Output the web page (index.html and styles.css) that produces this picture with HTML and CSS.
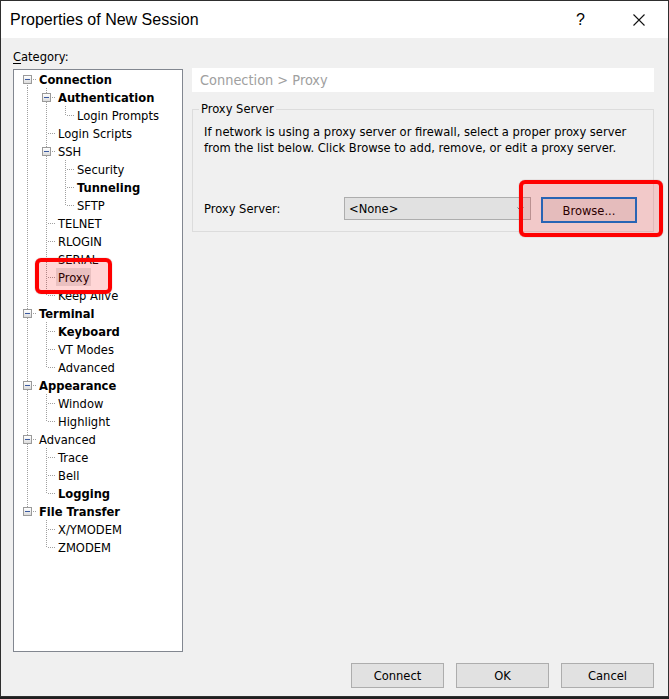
FILE: index.html
```html
<!DOCTYPE html>
<html lang="en">
<head>
<meta charset="utf-8">
<title>Properties of New Session</title>
<link rel="stylesheet" href="styles.css">
</head>
<body>
<div class="window">
  <div class="titlebar">
    <span class="title">Properties of New Session</span>
    <span class="help">?</span>
    <span class="close"><svg width="12" height="12" viewBox="0 0 12 12"><path d="M0.5 0.5 L11.5 11.5 M11.5 0.5 L0.5 11.5" stroke="#111" stroke-width="1.1" fill="none"/></svg></span>
  </div>
  <div class="content">
    <div class="main">
      <div class="left">
        <div class="cat-label"><u>C</u>ategory:</div>
        <div class="tree">
          <div class="row"><i class="c f"><b class="box"></b></i><span class="lbl b">Connection</span></div>
          <div class="row"><i class="c v"></i><i class="c t"><b class="box"></b></i><span class="lbl b">Authentication</span></div>
          <div class="row"><i class="c v"></i><i class="c v"></i><i class="c l"></i><span class="lbl">Login Prompts</span></div>
          <div class="row"><i class="c v"></i><i class="c t"></i><span class="lbl">Login Scripts</span></div>
          <div class="row"><i class="c v"></i><i class="c t"><b class="box"></b></i><span class="lbl">SSH</span></div>
          <div class="row"><i class="c v"></i><i class="c v"></i><i class="c t"></i><span class="lbl">Security</span></div>
          <div class="row"><i class="c v"></i><i class="c v"></i><i class="c t"></i><span class="lbl b">Tunneling</span></div>
          <div class="row"><i class="c v"></i><i class="c v"></i><i class="c l"></i><span class="lbl">SFTP</span></div>
          <div class="row"><i class="c v"></i><i class="c t"></i><span class="lbl">TELNET</span></div>
          <div class="row"><i class="c v"></i><i class="c t"></i><span class="lbl">RLOGIN</span></div>
          <div class="row"><i class="c v"></i><i class="c t"></i><span class="lbl">SERIAL</span></div>
          <div class="row"><i class="c v"></i><i class="c t"></i><span class="lbl sel">Proxy</span><div class="mark mark-proxy"></div></div>
          <div class="row"><i class="c v"></i><i class="c l"></i><span class="lbl">Keep Alive</span></div>
          <div class="row"><i class="c t"><b class="box"></b></i><span class="lbl b">Terminal</span></div>
          <div class="row"><i class="c v"></i><i class="c t"></i><span class="lbl b">Keyboard</span></div>
          <div class="row"><i class="c v"></i><i class="c t"></i><span class="lbl">VT Modes</span></div>
          <div class="row"><i class="c v"></i><i class="c l"></i><span class="lbl">Advanced</span></div>
          <div class="row"><i class="c t"><b class="box"></b></i><span class="lbl b">Appearance</span></div>
          <div class="row"><i class="c v"></i><i class="c t"></i><span class="lbl">Window</span></div>
          <div class="row"><i class="c v"></i><i class="c l"></i><span class="lbl">Highlight</span></div>
          <div class="row"><i class="c t"><b class="box"></b></i><span class="lbl">Advanced</span></div>
          <div class="row"><i class="c v"></i><i class="c t"></i><span class="lbl">Trace</span></div>
          <div class="row"><i class="c v"></i><i class="c t"></i><span class="lbl">Bell</span></div>
          <div class="row"><i class="c v"></i><i class="c l"></i><span class="lbl b">Logging</span></div>
          <div class="row"><i class="c l"><b class="box"></b></i><span class="lbl b">File Transfer</span></div>
          <div class="row"><i class="c"></i><i class="c t"></i><span class="lbl">X/YMODEM</span></div>
          <div class="row"><i class="c"></i><i class="c l"></i><span class="lbl">ZMODEM</span></div>
        </div>
      </div>
      <div class="right">
        <div class="crumb">Connection &gt; Proxy</div>
        <fieldset class="group">
          <legend>Proxy Server</legend>
          <p class="desc">If network is using a proxy server or firewall, select a proper proxy server<br>from the list below. Click Browse to add, remove, or edit a proxy server.</p>
          <div class="proxy-row">
            <label class="plabel">Proxy Server:</label>
            <div class="select"><span>&lt;None&gt;</span><svg width="7" height="4" viewBox="0 0 7 4"><path d="M0.5 0.5 L3.5 3.5 L6.5 0.5" fill="none" stroke="#777" stroke-width="1"/></svg></div>
            <div class="browse-wrap">
              <button class="btn default">Browse...</button>
              <div class="mark mark-browse"></div>
            </div>
          </div>
        </fieldset>
      </div>
    </div>
    <div class="footer">
      <button class="btn">Connect</button>
      <button class="btn">OK</button>
      <button class="btn">Cancel</button>
    </div>
  </div>
</div>
</body>
</html>
```
FILE: styles.css
```css
* { box-sizing: border-box; }
html, body { margin: 0; padding: 0; }
body {
  background: #1f1f1f;
  width: 669px;
  height: 699px;
  overflow: hidden;
  font-family: "DejaVu Sans Condensed", "DejaVu Sans", sans-serif;
  font-stretch: condensed;
  font-size: 12.8px;
  color: #000;
}
.window {
  width: 669px;
  height: 697px;
  border: 1px solid #2e2e2e;
  background: #f0f0f0;
  display: flex;
  flex-direction: column;
}
.titlebar {
  height: 37px;
  flex: none;
  background: #fff;
  display: flex;
  align-items: center;
  padding-left: 9px;
}
.title {
  flex: 1;
  font-family: "Liberation Sans", Arial, sans-serif;
  font-stretch: normal;
  font-size: 16px;
  color: #000;
}
.help {
  font-family: "Liberation Sans", Arial, sans-serif;
  font-stretch: normal;
  font-size: 16px;
  margin-right: 48px;
}
.close {
  width: 12px;
  height: 12px;
  margin-right: 23px;
  display: flex;
}
.content {
  flex: 1;
  display: flex;
  flex-direction: column;
  padding: 11px 14px 0 12px;
}
.main { display: flex; }
.left { width: 170px; flex: none; }
.cat-label { height: 15px; line-height: 15px; margin-bottom: 5px; }
.cat-label u { text-decoration-thickness: 1px; text-underline-offset: 2px; }
.tree {
  height: 583px;
  border: 1px solid #828790;
  background: #fff;
  padding-left: 3px;
}
.row {
  display: flex;
  height: 18px;
  line-height: 18px;
  position: relative;
  white-space: nowrap;
}
.c {
  width: 19px;
  height: 18px;
  flex: none;
  position: relative;
}
.c.v::before, .c.t::before, .c.l::before, .c.f::before {
  content: "";
  position: absolute;
  left: 10px;
  width: 1px;
  top: 0;
  bottom: 0;
  background: repeating-linear-gradient(to bottom, #a0a0a0 0 1px, transparent 1px 2px);
}
.c.f::before { top: 9px; }
.c.l::before { bottom: 9px; }
.c.t::after, .c.l::after, .c.f::after {
  content: "";
  position: absolute;
  left: 11px;
  right: 0;
  top: 9px;
  height: 1px;
  background: repeating-linear-gradient(to right, transparent 0 1px, #a0a0a0 1px 2px);
}
.box {
  position: absolute;
  left: 6px;
  top: 5px;
  width: 9px;
  height: 9px;
  border: 1px solid #9a9a9a;
  background: linear-gradient(#ffffff, #dcdcdc);
  z-index: 1;
}
.box::after {
  content: "";
  position: absolute;
  left: 1px;
  top: 3px;
  width: 5px;
  height: 1px;
  background: #3b5aa0;
}
.lbl {
  display: inline-block;
  height: 18px;
  line-height: 20px;
  margin-left: 1px;
  padding: 0 2px;
}
.lbl.b { font-weight: bold; }
.lbl.sel { background: #e5e5e5; }
.mark {
  position: absolute;
  border: 4px solid #ff0000;
  border-radius: 6px;
  background: rgba(255, 0, 0, 0.16);
  box-shadow: 0 0 1px rgba(90, 0, 0, 0.6);
  z-index: 2;
}
.mark-proxy { left: 18px; top: -10px; width: 77px; height: 36px; }
.right {
  flex: 1;
  margin-left: 9px;
  margin-top: 19px;
}
.crumb {
  height: 24px;
  line-height: 25px;
  background: #fff;
  padding-left: 8px;
  color: #a0a0a0;
  font-size: 14.4px;
}
.group {
  margin: 9px 0 0;
  padding: 0 11px 8px;
  border: 1px solid #dcdcdc;
  min-width: 0;
}
.group legend {
  padding: 0 2px;
  margin-left: -5px;
  line-height: 16px;
}
.desc {
  margin: 7px 0 0;
  line-height: 16px;
  white-space: nowrap;
}
.proxy-row {
  display: flex;
  align-items: flex-start;
  margin-top: 41px;
}
.plabel { width: 140px; line-height: 23px; flex: none; }
.select {
  width: 187px;
  height: 23px;
  flex: none;
  background: #e1e1e1;
  border: 1px solid #adadad;
  display: flex;
  align-items: center;
  justify-content: space-between;
  padding: 0 6px 0 4px;
}
.browse-wrap { position: relative; margin-left: 10px; }
.btn {
  width: 93px;
  height: 25px;
  background: #e1e1e1;
  border: 1px solid #adadad;
  font: inherit;
  color: #000;
  padding: 0;
}
.btn.default {
  width: 96px;
  height: 26px;
  border: 1px solid #0078d7;
  box-shadow: inset 0 0 0 1px #0078d7;
}
.mark-browse { left: -22px; top: -17px; width: 144px; height: 57px; }
.footer {
  display: flex;
  justify-content: flex-end;
  gap: 12px;
  margin-top: 11px;
}
```
